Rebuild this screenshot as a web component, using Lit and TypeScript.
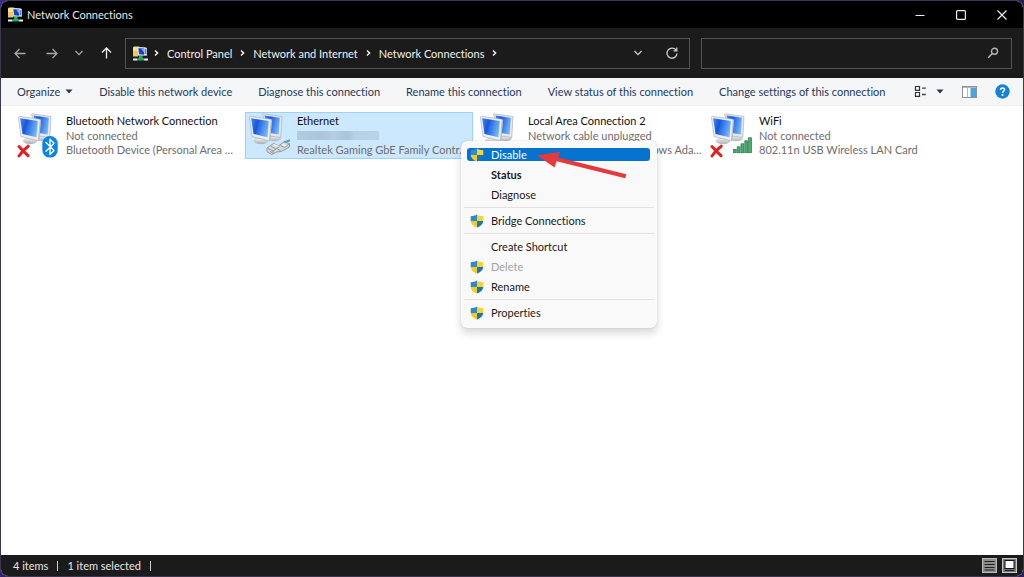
import { LitElement, html, svg, css, nothing } from "lit";
import { customElement, property } from "lit/decorators.js";

type Badge = "bluetooth" | "cable" | "wifi" | "none";

interface Connection {
  name: string;
  status: string;
  device: string;
  badge: Badge;
  offline: boolean;
  selected?: boolean;
}

interface MenuEntry {
  label: string;
  shield?: boolean;
  kind?: "active" | "bold" | "disabled";
}

const CONNECTIONS: Connection[] = [
  { name: "Bluetooth Network Connection", status: "Not connected", device: "Bluetooth Device (Personal Area Network)", badge: "bluetooth", offline: true },
  { name: "Ethernet", status: "", device: "Realtek Gaming GbE Family Controller", badge: "cable", offline: false, selected: true },
  { name: "Local Area Connection 2", status: "Network cable unplugged", device: "ExpressVPN TAP v9 Windows Adapter", badge: "none", offline: false },
  { name: "WiFi", status: "Not connected", device: "802.11n USB Wireless LAN Card", badge: "wifi", offline: true },
];

const MENU: MenuEntry[][] = [
  [
    { label: "Disable", shield: true, kind: "active" },
    { label: "Status", kind: "bold" },
    { label: "Diagnose" },
  ],
  [{ label: "Bridge Connections", shield: true }],
  [
    { label: "Create Shortcut" },
    { label: "Delete", shield: true, kind: "disabled" },
    { label: "Rename", shield: true },
  ],
  [{ label: "Properties", shield: true }],
];

const COMMANDS = [
  "Disable this network device",
  "Diagnose this connection",
  "Rename this connection",
  "View status of this connection",
  "Change settings of this connection",
];

const CRUMBS = ["Control Panel", "Network and Internet", "Network Connections"];

const appIcon = () => html`
  <svg class="app-icon" viewBox="0 0 15 15" width="15" height="15" aria-hidden="true">
    <path d="M1 .5h5l1 1h2.500v8H0V1.500z" fill="#f7e08a" />
    <path d="M0 5h5v5.500H0z" fill="#ecca62" />
    <path d="M4.500 1l7.500 .3 1.900.7v7.800L5.600 9.400z" fill="#d7dff0" />
    <path d="M5.400 2.200l5.800.4v6.200l-5-.6z" fill="#1740c4" />
    <path d="M8 2.500l3.200.2v4z" fill="#7eabfc" />
    <path d="M12 3l1.200.3v5L12 8z" fill="#4a7be8" />
    <path d="M6 9.800h3.600v2l2 1v1.700H4v-1.700l2-1z" fill="#23a866" />
    <path d="M0 12.400h4.200v2H0zM11.200 12.400H15v2h-3.800z" fill="#e9efec" />
  </svg>`;

const shieldIcon = () => html`
  <svg class="shield" viewBox="0 0 14 14" width="14" height="14" aria-hidden="true">
    <path d="M7 .6C5.300 1.700 3 2.200.7 2.200V7H7z" fill="#2b8bcb" />
    <path d="M7 .6c1.700 1.100 4 1.600 6.300 1.600V7H7z" fill="#fad42c" />
    <path d="M.7 7c.3 3.300 2.900 5.400 6.300 6.600V7z" fill="#f5cb23" />
    <path d="M13.300 7c-.3 3.300-2.900 5.400-6.300 6.600V7z" fill="#1878b4" />
  </svg>`;

const badgeShape = (badge: Badge) => {
  switch (badge) {
    case "bluetooth":
      return svg`
        <rect x="27.300" y="23" width="15.400" height="21.600" rx="7.500" fill="#0a84e8" />
        <path d="M31 29.500l8 8-4 4V26.200l4 4-8 8" fill="none" stroke="#fff" stroke-width="1.400" stroke-linejoin="round" stroke-linecap="round" />`;
    case "cable":
      return svg`
        <path d="M38 29.500l6-2.200" stroke="#45a5de" stroke-width="2" />
        <path d="M21 35l6.500-4.500 5 2.300L38 29l5.500 1.500v3.500l-8.500 4.500-4 .4-5.500 2.600-4.500-3z" fill="#d6dadd" stroke="#7b868e" stroke-width=".8" stroke-linejoin="round" />
        <path d="M22 35.500l5 2.500 6.500-4.500M27 38v3M31 35.500l3.500 2.300M34.500 32.500l4 2 4.500-3.200M25 33.500l4.500 2M24 38.500l2 1" fill="none" stroke="#7b868e" stroke-width=".8" />
        <path d="M28 31.500l4.500 2M36 31.200l4 1.600" stroke="#fff" stroke-width="1" />`;
    case "wifi":
      return svg`
        <g fill="#4fa972" stroke="#1f7a45" stroke-width=".7">
          <rect x="25.400" y="36.500" width="2.800" height="3.200" />
          <rect x="29.200" y="33.800" width="2.800" height="5.900" />
          <rect x="33" y="30.800" width="2.800" height="8.900" />
          <rect x="36.800" y="27.800" width="2.800" height="11.900" />
          <rect x="40.600" y="24.800" width="2.900" height="14.900" />
        </g>`;
    default:
      return nothing;
  }
};

const connectionIcon = (c: Connection) => html`
  <svg class="connection-icon" viewBox="0 0 46 45" width="46" height="45" aria-hidden="true">
    <defs>
      <linearGradient id="screen" x1="0" y1=".35" x2="1" y2=".65">
        <stop offset="0" stop-color="#3b7df0" />
        <stop offset=".3" stop-color="#1556dc" />
        <stop offset=".42" stop-color="#2a6de6" />
        <stop offset="1" stop-color="#7dbdf9" />
      </linearGradient>
      <linearGradient id="base" x1="0" y1="0" x2="0" y2="1">
        <stop offset="0" stop-color="#f4f5f6" />
        <stop offset="1" stop-color="#a9afb4" />
      </linearGradient>
    </defs>
    <ellipse cx="28.500" cy="25.600" rx="6" ry="2.400" fill="url(#base)" stroke="#b4b9bd" stroke-width=".4" />
    <path d="M16.500 1.500L17.500.8l18.500 2.700-1.200 21-11-1.500z" fill="#e6e8ea" stroke="#a2a8ae" stroke-width=".6" />
    <path d="M18.500 2.600l15.300 2.200-1 16.800-9-1.500z" fill="url(#screen)" />
    <path d="M11.500 23l7.500 1.800v3.400h-7z" fill="#c3c7ca" />
    <ellipse cx="15" cy="28" rx="6.800" ry="2.900" fill="url(#base)" stroke="#b0b5b9" stroke-width=".4" />
    <path d="M3.400 4.200L4.400 3.300l20.400 2.900 1 .9-1.800 20.400-1.300.2L6 23.500z" fill="#eceeef" stroke="#a2a8ae" stroke-width=".6" />
    <path d="M5.200 5.200l17.600 2.700-1.300 16.400L7.500 21z" fill="url(#screen)" />
    <path d="M24.800 6.400l1 .7-1.800 20.400-1 .2z" fill="#b9bfc4" />
    ${badgeShape(c.badge)}
    ${c.offline
      ? svg`<path d="M4 33.500q4 4.500 9 9.200M13.200 33.200Q8 37 4 43" fill="none" stroke="#dc2323" stroke-width="3" stroke-linecap="round" />`
      : nothing}
  </svg>`;

@customElement("connection-tile")
export class ConnectionTile extends LitElement {
  @property({ attribute: false }) connection!: Connection;

  static styles = css`
    :host {
      display: block;
      min-width: 0;
    }
    .tile {
      box-sizing: border-box;
      width: 100%;
      display: flex;
      gap: 5px;
      padding: 0;
      border: 1px solid transparent;
      background: none;
      font: inherit;
      font-variant-ligatures: inherit;
      color: #6d6d6d;
      text-align: left;
    }
    .tile.selected {
      background: #cce8ff;
      border-color: #99d1ff;
    }
    .connection-icon {
      flex: none;
      display: block;
    }
    .lines {
      flex: 1;
      min-width: 0;
      display: flex;
      flex-direction: column;
    }
    .line {
      line-height: 15px;
      overflow: hidden;
      white-space: nowrap;
      text-overflow: ellipsis;
    }
    .line:last-child {
      line-height: 14px;
    }
    .name {
      color: #111;
    }
    .redacted {
      width: 82px;
      height: 9px;
      margin: 3px 0;
      background: linear-gradient(90deg, #b3cbde, #adc5d9 30%, #b6cde0 45%, #abc3d7 62%, #b8d0e3 70%, #b9d2e6);
    }
  `;

  render() {
    const c = this.connection;
    return html`
      <button class="tile ${c.selected ? "selected" : ""}" type="button">
        ${connectionIcon(c)}
        <span class="lines">
          <span class="line name">${c.name}</span>
          ${c.status ? html`<span class="line">${c.status}</span>` : html`<span class="redacted"></span>`}
          <span class="line">${c.device}</span>
        </span>
      </button>`;
  }
}

@customElement("app-root")
export class AppRoot extends LitElement {
  static styles = css`
    :host {
      display: block;
      height: 100vh;
      background: linear-gradient(115deg, #3b2a8c, #2b1650 50%, #3a1568);
      font-family: Lato, "Open Sans", sans-serif;
      font-size: 11px;
      font-variant-ligatures: none;
      line-height: 15px;
    }
    button {
      font: inherit;
      font-variant-ligatures: inherit;
      color: inherit;
      background: none;
      border: 0;
      padding: 0;
      margin: 0;
    }
    svg {
      display: block;
    }
    .window {
      box-sizing: border-box;
      height: 100%;
      display: flex;
      flex-direction: column;
      border: 1px solid #3c3556;
      border-radius: 8px;
      overflow: hidden;
      background: #fff;
    }
    .title-bar {
      flex: none;
      height: 27px;
      display: flex;
      align-items: center;
      padding: 0 1px 0 7px;
      background: #000;
      color: #e8e8e8;
    }
    .title {
      flex: 1;
      margin: 0 0 0 4px;
      font-size: 11px;
      font-weight: 400;
    }
    .caption-button {
      width: 41px;
      height: 27px;
      display: grid;
      place-items: center;
      color: #eee;
    }
    .nav-bar {
      flex: none;
      height: 50px;
      display: flex;
      align-items: center;
      padding: 0 11px 0 3px;
      background: #1b1b1b;
      color: #f0f0f0;
    }
    .history {
      display: flex;
      width: 121px;
    }
    .history-button {
      width: 32px;
      height: 30px;
      display: grid;
      place-items: center;
      color: #a8a8a8;
    }
    .history-button.narrow {
      width: 22px;
    }
    .history-button.up {
      color: #f0f0f0;
    }
    .address,
    .search {
      box-sizing: border-box;
      height: 31px;
      display: flex;
      align-items: center;
      border: 1px solid #535353;
    }
    .address {
      flex: 556;
      padding-left: 7px;
    }
    .crumbs {
      flex: 1;
      display: flex;
      align-items: center;
      gap: 8px;
      margin-left: 6px;
    }
    .crumb {
      color: inherit;
      text-decoration: none;
      white-space: nowrap;
    }
    .address-button {
      width: 34px;
      height: 29px;
      display: grid;
      place-items: center;
      color: #d0d0d0;
    }
    .search {
      flex: 297;
      margin-left: 11px;
      padding-right: 12px;
    }
    .search-input {
      flex: 1;
      min-width: 0;
      height: 27px;
      padding: 0 8px;
      border: 0;
      outline: 0;
      background: none;
      font: inherit;
      color: #f0f0f0;
    }
    .command-bar {
      flex: none;
      height: 27px;
      display: flex;
      align-items: center;
      gap: 26px;
      padding: 0 13px 0 16px;
      background: #f5f6f8;
      border-bottom: 1px solid #ededef;
      color: #1e395b;
      white-space: nowrap;
    }
    .with-caret {
      display: flex;
      align-items: center;
      gap: 5px;
    }
    .tools {
      margin-left: auto;
      display: flex;
      align-items: center;
      gap: 18px;
    }
    .view-button {
      display: flex;
      align-items: center;
      gap: 9px;
    }
    .content {
      flex: 1;
      min-height: 0;
      position: relative;
      padding: 6px 0 0 13px;
    }
    .connections {
      display: grid;
      grid-template-columns: repeat(auto-fill, 228px);
      column-gap: 3px;
      margin: 0;
      padding: 0;
      list-style: none;
    }
    .context-menu {
      position: absolute;
      left: 460px;
      top: 35px;
      box-sizing: border-box;
      width: 196px;
      display: flex;
      flex-direction: column;
      padding: 3px 0 6px;
      border-radius: 6px;
      background: #f9f9f9;
      box-shadow: 0 0 1px rgba(0, 0, 0, 0.25), 0 5px 9px rgba(0, 0, 0, 0.16);
      color: #1a1a1a;
    }
    .menu-item {
      height: 13px;
      margin: 4px 7px 3px 6px;
      display: flex;
      align-items: center;
      line-height: 13px;
      border-radius: 3px;
    }
    .menu-icon {
      width: 24px;
      display: flex;
      padding-left: 3px;
      box-sizing: border-box;
    }
    .active {
      background: #0573cf;
      color: #fff;
    }
    .bold {
      font-weight: 700;
    }
    .disabled {
      color: #a3a3a3;
    }
    .separator {
      width: calc(100% - 6px);
      height: 1px;
      margin: 3px 3px 2px;
      border: 0;
      background: #e2e2e2;
    }
    .pointer {
      position: absolute;
      left: 536px;
      top: 44px;
    }
    .status-bar {
      flex: none;
      height: 21px;
      display: flex;
      align-items: center;
      padding: 0 6px 0 12px;
      background: #1b1b1b;
      color: #e6e6e6;
    }
    .divider {
      width: 1px;
      height: 10px;
      margin: 0 9px;
      background: #d0d0d0;
    }
    .layouts {
      margin-left: auto;
      display: flex;
      gap: 5px;
    }
  `;

  private crumbChevron() {
    return html`<svg width="5" height="8" viewBox="0 0 5 8" aria-hidden="true">
      <path d="M1 1.500L3.600 4 1 6.500" fill="none" stroke="#f0f0f0" stroke-width="1.500" />
    </svg>`;
  }

  private chevronDown() {
    return html`<svg width="10" height="6" viewBox="0 0 10 6" aria-hidden="true">
      <path d="M1.500 1L5 4.600 8.500 1" fill="none" stroke="currentColor" stroke-width="1.300" />
    </svg>`;
  }

  private caret() {
    return html`<svg width="8" height="5" viewBox="0 0 8 5" aria-hidden="true">
      <path d="M.5.5h7L4 4.500z" fill="#1e395b" />
    </svg>`;
  }

  private renderTitleBar() {
    return html`
      <header class="title-bar">
        ${appIcon()}
        <h1 class="title">Network Connections</h1>
        <button class="caption-button" type="button" aria-label="Minimize">
          <svg width="10" height="10" viewBox="0 0 10 10"><path d="M.5 5.500h9" stroke="currentColor" /></svg>
        </button>
        <button class="caption-button" type="button" aria-label="Maximize">
          <svg width="10" height="10" viewBox="0 0 10 10"><rect x=".6" y=".6" width="8.800" height="8.800" rx="1" fill="none" stroke="currentColor" stroke-width="1.200" /></svg>
        </button>
        <button class="caption-button" type="button" aria-label="Close">
          <svg width="10" height="10" viewBox="0 0 10 10"><path d="M.5.5l9 9M9.500.5l-9 9" stroke="currentColor" stroke-width="1.200" /></svg>
        </button>
      </header>`;
  }

  private renderNavBar() {
    return html`
      <div class="nav-bar">
        <div class="history">
          <button class="history-button" type="button" aria-label="Back">
            <svg width="12" height="11" viewBox="0 0 12 11"><path d="M11.500 5.500H1M5.500 1L1 5.500 5.500 10" fill="none" stroke="currentColor" stroke-width="1.300" /></svg>
          </button>
          <button class="history-button" type="button" aria-label="Forward">
            <svg width="12" height="11" viewBox="0 0 12 11"><path d="M.5 5.500H11M6.500 1L11 5.500 6.500 10" fill="none" stroke="currentColor" stroke-width="1.300" /></svg>
          </button>
          <button class="history-button narrow" type="button" aria-label="Recent locations">${this.chevronDown()}</button>
          <button class="history-button up" type="button" aria-label="Up">
            <svg width="11" height="12" viewBox="0 0 11 12"><path d="M5.500 11.500V1M1 5.500L5.500 1 10 5.500" fill="none" stroke="currentColor" stroke-width="1.300" /></svg>
          </button>
        </div>
        <div class="address">
          ${appIcon()}
          <nav class="crumbs" aria-label="Address">
            ${this.crumbChevron()}
            ${CRUMBS.map((c) => html`<a class="crumb" href="#">${c}</a>${this.crumbChevron()}`)}
          </nav>
          <button class="address-button" type="button" aria-label="Previous locations">${this.chevronDown()}</button>
          <button class="address-button" type="button" aria-label="Refresh">
            <svg width="12" height="12" viewBox="0 0 12 12">
              <path d="M10.300 3.600A5 5 0 1 0 11 6.500" fill="none" stroke="currentColor" stroke-width="1.300" />
              <path d="M7.500 3.800h3.300V.6" fill="none" stroke="currentColor" stroke-width="1.300" />
            </svg>
          </button>
        </div>
        <label class="search">
          <input class="search-input" type="text" aria-label="Search Network Connections" />
          <svg width="12" height="12" viewBox="0 0 12 12" aria-hidden="true">
            <circle cx="7.500" cy="4.300" r="3" fill="none" stroke="#b4b4b4" stroke-width="1.400" />
            <path d="M5.300 6.500L1.200 10.800" stroke="#b4b4b4" stroke-width="1.500" />
          </svg>
        </label>
      </div>`;
  }

  private renderCommandBar() {
    return html`
      <div class="command-bar" role="toolbar">
        <button class="with-caret" type="button">Organize ${this.caret()}</button>
        ${COMMANDS.map((c) => html`<button type="button">${c}</button>`)}
        <div class="tools">
          <button class="view-button" type="button" aria-label="Change your view">
            <svg width="13" height="13" viewBox="0 0 13 13">
              <path d="M1.500 1.500h4v3.800h-4zM1.500 7.500h4v3.800h-4z" fill="#fff" stroke="#333" stroke-width="1.200" />
              <path d="M8 3.200h3.800M8 9.500h3.800" stroke="#444" stroke-width="1.300" />
            </svg>
            ${this.caret()}
          </button>
          <button type="button" aria-label="Preview pane">
            <svg width="15" height="12" viewBox="0 0 15 12">
              <rect x=".5" y=".5" width="14" height="11" fill="#fff" stroke="#8b9298" />
              <path d="M1 1.500h13" stroke="#b3b9be" />
              <path d="M5.500 2v9" stroke="#b3b9be" />
              <rect x="8.500" y="2" width="5.500" height="9" fill="#4aa4e0" />
            </svg>
          </button>
          <button type="button" aria-label="Help">
            <svg width="15" height="15" viewBox="0 0 15 15">
              <circle cx="7.500" cy="7.500" r="7.200" fill="#1482d8" />
              <path d="M5.500 5.900C5.500 3.300 9.600 3.400 9.500 5.800 9.400 7.200 7.500 7.300 7.500 9" fill="none" stroke="#fff" stroke-width="1.500" />
              <circle cx="7.500" cy="11" r="1" fill="#fff" />
            </svg>
          </button>
        </div>
      </div>`;
  }

  private renderMenu() {
    return html`
      <div class="context-menu" role="menu">
        ${MENU.map((group, i) => html`
          ${i > 0 ? html`<hr class="separator" />` : nothing}
          ${group.map((e) => html`
            <button class="menu-item ${e.kind ?? ""}" type="button" role="menuitem" ?disabled=${e.kind === "disabled"}>
              <span class="menu-icon">${e.shield ? shieldIcon() : nothing}</span>${e.label}
            </button>`)}
        `)}
      </div>`;
  }

  render() {
    return html`
      <div class="window">
        ${this.renderTitleBar()}
        ${this.renderNavBar()}
        ${this.renderCommandBar()}
        <main class="content">
          <ul class="connections">
            ${CONNECTIONS.map((c) => html`<li><connection-tile .connection=${c}></connection-tile></li>`)}
          </ul>
          ${this.renderMenu()}
          <svg class="pointer" width="92" height="30" viewBox="0 0 92 30" aria-hidden="true">
            <path d="M0 5.200L23.500 1.800 20.700 7.300 89.300 24.200 88.300 28.200 19.600 11.300 17.500 17.500z" fill="#e5393c" />
          </svg>
        </main>
        <footer class="status-bar">
          <span>4 items</span>
          <span class="divider"></span>
          <span>1 item selected</span>
          <span class="divider"></span>
          <div class="layouts">
            <button type="button" aria-label="Details view">
              <svg width="15" height="15" viewBox="0 0 15 15">
                <rect x=".5" y=".5" width="14" height="14" fill="#8d8d8d" stroke="#b8b8b8" />
                <path d="M2.500 3.500h10M2.500 6.500h10M2.500 9.500h10M2.500 12h10" stroke="#222" stroke-width="1.200" />
              </svg>
            </button>
            <button type="button" aria-label="Large icons view">
              <svg width="15" height="15" viewBox="0 0 15 15">
                <rect x=".5" y=".5" width="14" height="14" fill="#777" stroke="#c8c8c8" />
                <rect x="3" y="2.500" width="9" height="8" fill="#fff" stroke="#111" />
                <path d="M3 12.500h9" stroke="#222" />
              </svg>
            </button>
          </div>
        </footer>
      </div>`;
  }
}
